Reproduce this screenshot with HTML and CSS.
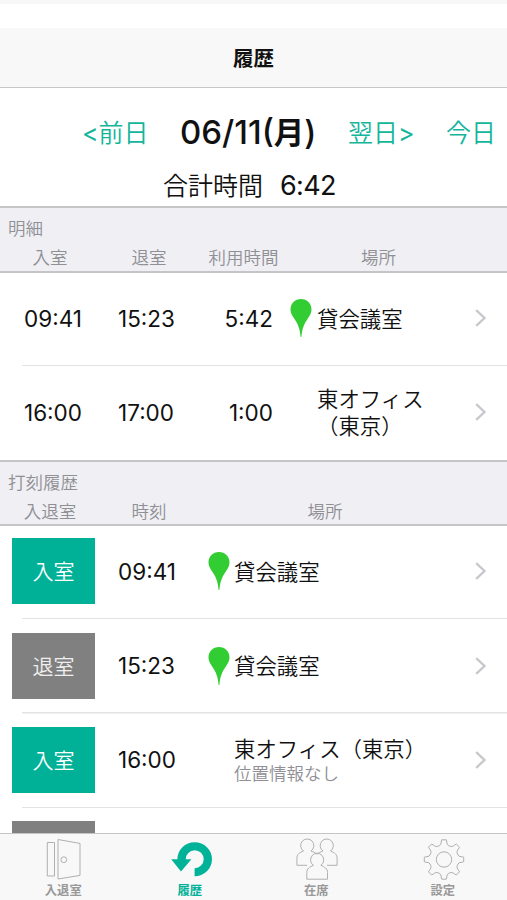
FILE: index.html
```html
<!DOCTYPE html>
<html lang="ja">
<head>
<meta charset="utf-8">
<title>履歴</title>
<link rel="stylesheet" href="styles.css">
</head>
<body>
<svg width="0" height="0" class="defs">
  <symbol id="pin" viewBox="0 0 22 38"><path d="M11 0C4.900 0 .5 4.600.5 10.500c0 3.400 1.600 6 4 9.500C8 25 10 30 10.600 38h.8C12 30 14 25 17.500 20c2.400-3.500 4-6.100 4-9.500C21.500 4.600 17.100 0 11 0z" fill="#32cd32"/></symbol>
  <symbol id="chev" viewBox="0 0 12 18"><path d="M1.200 1.200 9.500 9l-8.300 7.800" fill="none" stroke="#c7c7cc" stroke-width="2.300"/></symbol>
</svg>
<div class="screen">
  <div class="strip"></div>
  <header class="nav">履歴</header>
  <section class="summary">
    <div class="days">
      <a class="prev"><em>&lt;</em>前日</a>
      <strong class="date">06/11(<b>月</b>)</strong>
      <a class="next">翌日<em>&gt;</em></a>
      <a class="today">今日</a>
    </div>
    <div class="total"><span>合計時間</span><span class="sum">6:42</span></div>
  </section>
  <div class="section first">
    <div class="caption">明細</div>
    <div class="heads detail"><span>入室</span><span>退室</span><span>利用時間</span><span>場所</span></div>
  </div>
  <div class="row detail">
    <time>09:41</time><time>15:23</time><time class="dur">5:42</time>
    <svg class="pin"><use href="#pin"/></svg><div class="place">貸会議室</div><svg class="chev"><use href="#chev"/></svg>
  </div>
  <div class="row detail last">
    <time>16:00</time><time>17:00</time><time class="dur">1:00</time>
    <i></i><div class="place">東オフィス<br>（東京）</div><svg class="chev"><use href="#chev"/></svg>
  </div>
  <div class="section">
    <div class="caption">打刻履歴</div>
    <div class="heads log"><span>入退室</span><span>時刻</span><span>場所</span></div>
  </div>
  <div class="row log">
    <div class="badge in">入室</div><time>09:41</time>
    <svg class="pin"><use href="#pin"/></svg><div class="place">貸会議室</div><svg class="chev"><use href="#chev"/></svg>
  </div>
  <div class="row log">
    <div class="badge out">退室</div><time>15:23</time>
    <svg class="pin"><use href="#pin"/></svg><div class="place">貸会議室</div><svg class="chev"><use href="#chev"/></svg>
  </div>
  <div class="row log">
    <div class="badge in">入室</div><time>16:00</time>
    <i></i><div class="place">東オフィス（東京）<small>位置情報なし</small></div><svg class="chev"><use href="#chev"/></svg>
  </div>
  <div class="peek"><div class="badge out"></div></div>
  <nav class="tabs">
    <a>
      <svg viewBox="0 0 42 42" fill="none" stroke="#b0b0b0"><path d="M5.300 4.500h7.200v33.500H5.300zM16 1.500l22 3.900v32L16 41z"/><circle cx="21.800" cy="21.700" r="2.900"/></svg>
      <span>入退室</span>
    </a>
    <a class="on">
      <svg viewBox="0 0 42 42"><path d="M2.200 21.300H8.400A17.300 17 0 1 1 25.600 38.200V30.200A9 9 0 1 0 16.700 21.300H22.400L12 33.400z" fill="#00b398"/></svg>
      <span>履歴</span>
    </a>
    <a>
      <svg viewBox="0 0 42 42" fill="none" stroke="#b0b0b0"><path d="M12 27.300H1.900V20.500C1.900 16 4.500 14.800 8.500 13A6.600 6.600 0 1 1 16 13C18.500 14 20.500 14.700 22 16.200 23.500 14.700 25.500 14 28 13A6.600 6.600 0 1 1 35.500 13C39.500 14.800 42.100 16 42.100 20.500V27.300H32"/><path d="M11.800 41.200V34.500C11.800 30.500 14.400 29.300 18.400 27.300A6.600 6.600 0 1 1 25.900 27.300C29.900 29.300 32.500 30.500 32.500 34.500V41.200z"/></svg>
      <span>在席</span>
    </a>
    <a>
      <svg viewBox="0 0 42 42" fill="none" stroke="#b0b0b0"><g transform="translate(22 21.500)"><path d="M-2.300-19.700H2.300L3.300-15Q5.500-12.600 8.300-13L12.300-15.500 15.500-12.300 13-8.300Q12.600-5.500 15-3.300L19.700-2.300V2.300L15 3.300Q12.600 5.500 13 8.300L15.500 12.300 12.300 15.500 8.300 13Q5.500 12.600 3.300 15L2.300 19.700H-2.300L-3.300 15Q-5.500 12.600-8.300 13L-12.300 15.500-15.500 12.300-13 8.300Q-12.600 5.500-15 3.300L-19.700 2.300V-2.300L-15-3.300Q-12.600-5.500-13-8.300L-15.500-12.300-12.300-15.500-8.300-13Q-5.500-12.600-3.300-15z"/><circle r="7.700"/></g></svg>
      <span>設定</span>
    </a>
  </nav>
</div>
</body>
</html>
```

FILE: styles.css
```css
* { box-sizing: border-box; }
body {
  margin: 0;
  background: #fff;
  color: #111;
  font-family: Inter, "Noto Sans CJK JP", sans-serif;
  font-weight: 350;
}
.defs { display: block; }
.screen { width: 507px; height: 900px; overflow: hidden; display: flex; flex-direction: column; }
.screen > * { flex-shrink: 0; }
.strip { height: 28px; border-bottom: 24px solid #fff; background: #f7f7f7; }
.nav {
  height: 60px; background: #f8f8f8; border-bottom: 1px solid #c8c8ca;
  text-align: center; font-size: 20.5px; font-weight: 700; line-height: 61px;
}
.summary { height: 118px; }
.days { display: flex; align-items: center; height: 85px; padding-left: 82px; font-size: 25px; white-space: nowrap; }
.days a { color: #13b59b; }
.days em { font-style: normal; font-weight: 400; }
.prev { width: 98px; }
.date { width: 168px; font-size: 33px; font-weight: 500; }
.date b { font-size: 30.500px; font-weight: 700; }
.next { width: 98px; }
.total { display: flex; padding-left: 163px; gap: 17px; font-size: 25px; line-height: 26px; }
.sum { font-size: 27px; font-weight: 400; letter-spacing: -.7px; }
.section {
  height: 66px; background: #efeff4; color: #8f8f94; font-size: 17.500px;
  border-top: 2px solid #c5c5c7; border-bottom: 2px solid #c5c5c7;
}
.section.first { height: 67px; }
.caption { height: 35px; padding-left: 8px; line-height: 41px; }
.heads { display: grid; line-height: 30px; text-align: center; }
.heads.detail { grid-template-columns: 100px 98px 91px 179px; }
.heads.log { grid-template-columns: 100px 98px 254px; }
.row {
  display: grid; align-items: center; height: 94.400px; padding-bottom: 2px; font-size: 21.400px;
  background: linear-gradient(#e3e3e5, #e3e3e5) 22px 100% / 485px 1.500px no-repeat;
}
.section + .row { height: 93.400px; padding-bottom: 3px; }
.row.detail { grid-template-columns: 24px 94px 94px 78px 27px 158px 1fr; height: 94px; }
.section + .row.detail { height: 93px; }
.row.detail time:first-child { grid-column: 2; }
.row.last { background: none; }
.row.log { grid-template-columns: 118px 90px 26px 241px 1fr; }
time { font-size: 22.500px; font-weight: 400; }
.dur { width: 61px; text-align: right; }
.pin { width: 22px; height: 38px; }
.place { line-height: 27px; padding-top: 2px; }
.place small { display: block; font-size: 17.500px; line-height: 22px; color: #8f8f94; }
.chev { width: 12px; height: 18px; }
.badge {
  width: 83px; height: 66px; margin-left: 12px; color: #fff;
  text-align: center; line-height: 67px; font-size: 21px;
}
.in { background: #00b198; }
.out { background: #808080; color: #eee; }
.peek { height: 24.800px; padding-top: 13px; overflow: hidden; }
.tabs {
  flex: 1; display: grid; grid-template-columns: repeat(4, 126.500px);
  background: #f8f8f8; border-top: 1px solid #c5c5c7; z-index: 1;
}
.tabs a { display: flex; flex-direction: column; align-items: center; padding-top: 4px; color: #999; font-size: 12.300px; font-weight: 600; }
.tabs svg { width: 42px; height: 42px; overflow: visible; }
.tabs span { line-height: 22px; }
.tabs .on { color: #00b198; font-weight: 700; }
```
